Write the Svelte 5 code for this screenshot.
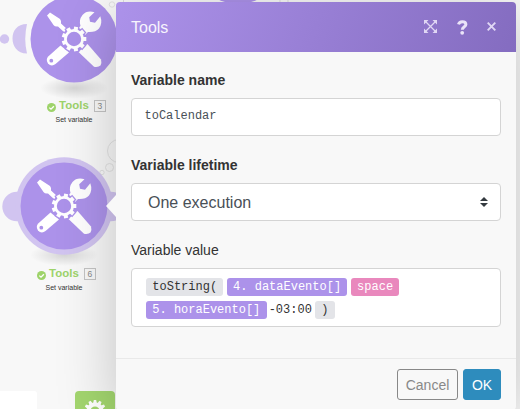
<script>
  const nodes = [
    { id: 3, x: 74, y: 38.5, lx: 76.5, active: false },
    { id: 6, x: 64, y: 206, lx: 66.5, active: true },
  ];
  const teeth = [0, 40, 80, 120, 160, 200, 240, 280, 320];
  const cogTeeth = [0, 30, 60, 90, 120, 150, 180, 210, 240, 270, 300, 330];
</script>

<div class="screen">
  <div class="canvas">
    <svg class="links" width="520" height="409" viewBox="0 0 520 409">
      <circle cx="4.5" cy="39" r="4.7" fill="#d1c4f0" />
      <path d="M27 24C17 24 12.500 31 12.500 38.500S17 53.500 27 53.500Q23.500 39 27 24Z" fill="#d1c4f0" />
      <circle cx="17" cy="206.500" r="14.700" fill="#d1c4f0" />
      <circle cx="111" cy="206.500" r="14.700" fill="#d1c4f0" />
      <g fill="#f8f8f8" stroke="#e2e2e2">
        <circle cx="112" cy="4.500" r="2.700" />
        <circle cx="119" cy="151" r="11.500" />
        <circle cx="109.500" cy="167.500" r="4" />
        <circle cx="102" cy="172.500" r="2.200" />
      </g>
      <path d="M123.500 0v2M280 0v2M288 0v2" stroke="#ddd" />
      <ellipse cx="238" cy="-40" rx="45" ry="44" fill="#ac92ea" />
    </svg>

    {#each nodes as n}
      <div class="node" style="left:{n.x}px; top:{n.y}px">
        <span class="ground"></span>
        <svg class="disc" width="100" height="100" viewBox="-50 -50 100 100">
          {#if n.active}<circle r="48.800" fill="#d1c4f0" />{/if}
          <circle r="43.500" fill="#ac92ea" />
          <g fill="#fff">
            <path d="M-24-26.500L-14-20Q-12.500-18.500-13-15.500L-6-9-9-6-16-12.500Q-19-12-20.500-14L-27-23.500Z" />
            <path d="M20.500-26.700L15.200-21.800 16-17.200 21-16.300 26.300-22.800Q28.800-16 25-10.500 21.500-6.500 14-7L6 1-2-6 6.500-13Q4.500-19 8.500-24 13-29 20.500-26.700Z" />
            <path d="M4.500 13L13.500 5 27 20.500Q28 24 26.500 26.500 24.500 28.500 20 27.800Z" />
            <path d="M-13.500 6.500L-5 13.500-18.500 25Q-22.500 28-26 24.500-28.500 20.500-25.800 17.500Z" />
          </g>
          <circle cx="-22.700" cy="21.700" r="1.900" fill="#ac92ea" />
          <circle r="12" fill="#ac92ea" />
          {#each teeth as a}
            <rect x="-3.300" y="-13.500" width="6.600" height="6" fill="#ac92ea" transform="rotate({a + 10})" />
          {/each}
          {#each teeth as a}
            <rect x="-2" y="-12.300" width="4" height="4" fill="#fff" transform="rotate({a + 10})" />
          {/each}
          <circle r="8.600" fill="#ac92ea" stroke="#fff" stroke-width="2.800" />
        </svg>
      </div>
      <div class="caption" style="left:{n.lx}px; top:{n.id === 3 ? 97 : 265}px">
        <div class="row">
          <svg width="9" height="9" viewBox="0 0 9 9">
            <circle cx="4.500" cy="4.500" r="4.500" fill="#9ed36a" />
            <path d="M2.300 4.600L4 6.200 6.900 3.200" fill="none" stroke="#fff" stroke-width="1.300" />
          </svg>
          <b>Tools</b>
          <span class="num">{n.id}</span>
        </div>
        <div class="sub">Set variable</div>
      </div>
    {/each}

    <div class="tile white"></div>
    <div class="tile green">
      <svg width="24" height="24" viewBox="-12 -12 24 24">
        {#each cogTeeth as a}
          <path d="M-2-7L-1.200-11H1.200L2-7Z" fill="#fff" transform="rotate({a})" />
        {/each}
        <circle r="6.500" fill="none" stroke="#fff" stroke-width="4" />
      </svg>
    </div>
  </div>

  <section class="dialog">
    <header>
      <h1>Tools</h1>
      <svg class="expand" width="13" height="13" viewBox="0 0 13 13">
        <path d="M0 0H4.500L0 4.500ZM13 0V4.500L8.500 0ZM13 13H8.500L13 8.500ZM0 13V8.500L4.500 13Z" fill="#e0d7f4" />
        <path d="M1.500 1.500L11.500 11.500M11.500 1.500L1.500 11.500" stroke="#e0d7f4" stroke-width="1.300" />
      </svg>
      <svg class="help" width="11" height="15" viewBox="0 0 11 15">
        <path d="M1.500 4.400C2 2.500 3.300 1.700 5.300 1.700C7.700 1.700 8.900 2.900 8.900 4.500C8.900 6.800 5.300 6.600 5.300 9.700" fill="none" stroke="#eae4f8" stroke-width="3" />
        <circle cx="5.200" cy="12.800" r="1.900" fill="#eae4f8" />
      </svg>
      <svg class="close" width="9" height="9" viewBox="0 0 9 9">
        <path d="M.7.700L8.300 8.300M8.300.700L.7 8.300" stroke="#e0d7f4" stroke-width="1.900" />
      </svg>
    </header>
    <span class="pointer"></span>

    <div class="body">
      <div class="label strong">Variable name</div>
      <div class="field mono">toCalendar</div>
      <div class="label strong">Variable lifetime</div>
      <div class="field select">
        <span>One execution</span>
        <svg width="8" height="10" viewBox="0 0 8 10">
          <path d="M0 4L4 0L8 4ZM0 6H8L4 10Z" fill="#343a40" />
        </svg>
      </div>
      <div class="label">Variable value</div>
      <div class="field value">
        <div class="line">
          <span class="pill gray">toString(</span><span class="pill purple">4. dataEvento[]</span><span class="pill pink">space</span>
        </div>
        <div class="line">
          <span class="pill purple">5. horaEvento[]</span><span class="plain">-03:00</span><span class="pill gray">)</span>
        </div>
      </div>
    </div>

    <footer>
      <button class="cancel">Cancel</button>
      <button class="ok">OK</button>
    </footer>
  </section>
</div>

<style>
  * { box-sizing: border-box; }
  .screen {
    position: relative;
    width: 520px;
    height: 409px;
    overflow: hidden;
    background: #f8f8f8;
    font-family: "Liberation Sans", Arial, sans-serif;
    font-size: 14px;
    color: #333;
  }
  .canvas { position: absolute; inset: 0; }
  .links { position: absolute; left: 0; top: 0; }
  .node { position: absolute; width: 0; height: 0; }
  .disc { position: absolute; left: -50px; top: -50px; }
  .ground {
    position: absolute;
    left: -34px;
    top: 38px;
    width: 68px;
    height: 22px;
    border-radius: 50%;
    background: radial-gradient(closest-side, rgba(0, 0, 0, 0.14), rgba(0, 0, 0, 0));
  }
  .caption {
    position: absolute;
    width: 80px;
    margin-left: -40px;
    display: flex;
    flex-direction: column;
    align-items: center;
  }
  .row { display: flex; align-items: center; height: 17px; }
  .row svg { margin: 4px 3px 0 0; }
  .row b { font-size: 11.5px; line-height: 17px; color: #9ed36a; }
  .num {
    width: 12px;
    height: 12px;
    margin-left: 5px;
    border: 1px solid #c4c4c4;
    font-size: 8.500px;
    line-height: 10px;
    text-align: center;
    color: #888;
  }
  .sub { margin: 1px 0 0 -5px; font-size: 7px; line-height: 9px; color: #333; white-space: nowrap; }
  .tile { position: absolute; top: 391px; height: 40px; }
  .white { left: -3px; width: 40px; background: #fff; border-radius: 3px; }
  .green {
    left: 75px;
    width: 40px;
    background: #a3d66f;
    border-radius: 4px;
    display: flex;
    justify-content: center;
    padding-top: 7.500px;
  }

  .dialog {
    position: absolute;
    left: 116px;
    top: 2px;
    width: 400px;
    height: 408px;
    display: flex;
    flex-direction: column;
    border-radius: 4px;
    background: #f8f8f8;
    box-shadow: 0 10px 60px rgba(0, 0, 0, 0.22);
  }
  header {
    height: 50px;
    flex: none;
    display: flex;
    align-items: center;
    padding: 0 20px 0 15px;
    border-radius: 4px 4px 0 0;
    background: linear-gradient(110deg, #ac92ea, #846cc0);
  }
  h1 { margin: 0 auto 0 0; padding-top: 2px; font-size: 16px; font-weight: 400; color: #f7f4fd; }
  .expand { margin: 0 20px 1px 0; }
  .help { margin: 0 19px 0 0; }
  .close { margin-bottom: 1px; }
  .pointer {
    position: absolute;
    left: -10px;
    top: 193px;
    border: solid transparent;
    border-width: 11px 10px 11px 0;
    border-right-color: #f8f8f8;
  }
  .body { flex: 1; padding: 19px 15px 0; }
  .label { height: 18px; line-height: 18px; margin-bottom: 9px; }
  .strong { font-weight: 700; }
  .field {
    height: 38px;
    margin-bottom: 20px;
    padding: 0 12px;
    border: 1px solid #d4d4d4;
    border-radius: 4px;
    background: #fff;
    color: #495057;
  }
  .mono { padding-left: 12.5px; font: 12px/34px "Liberation Mono", monospace; }
  .select {
    display: flex;
    align-items: center;
    justify-content: space-between;
    padding-left: 16px;
    font-size: 16px;
  }
  .select span { padding-top: 2px; }
  .value {
    height: 59px;
    margin: 0;
    padding: 9px 14px;
    font: 12px/18px "Liberation Mono", monospace;
  }
  .line { display: flex; margin-bottom: 5px; white-space: pre; }
  .pill { height: 18px; line-height: 18px; padding: 0 6.300px 0 6.300px; margin-right: 3.400px; border-radius: 3px; }
  .gray { background: #e3e4e8; color: #333; }
  .purple { background: #ac92ea; color: #fff; }
  .pink { background: #e988bd; color: #fff; }
  .plain { line-height: 18px; margin: 0 3px 0 -1.400px; color: #333; }
  footer {
    height: 52px;
    flex: none;
    display: flex;
    justify-content: flex-end;
    gap: 5px;
    padding: 10px 15px 0 0;
    border-top: 1px solid #e9e9e9;
  }
  button {
    height: 31px;
    padding: 1px 0 0;
    border-radius: 3px;
    font: 14px/29px "Liberation Sans", Arial, sans-serif;
  }
  .cancel { width: 61px; border: 1px solid #888; background: transparent; color: #888; }
  .ok { width: 38px; border: 1px solid #2e8cbd; background: #2e8cbd; color: #fff; }
</style>
